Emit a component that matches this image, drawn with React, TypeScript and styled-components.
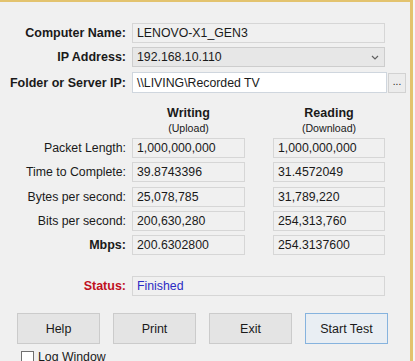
import React from 'react';
import styled, { createGlobalStyle } from 'styled-components';

const GlobalStyle = createGlobalStyle`
  html, body {
    margin: 0;
    padding: 0;
    background: #f6f6f6;
  }
  body {
    font-family: "Liberation Sans", Arial, sans-serif;
    color: #1a1a1a;
  }
`;

const Window = styled.div`
  width: 410px;
  height: 359px;
  background: #f0f0f0;
  border-top: 2px solid #e3c36e;
  border-right: 3px solid #e3c36e;
  display: flex;
  flex-direction: column;
  overflow: hidden;
  font-size: 12.3px;
`;

const Rows = styled.div<{ $gap: number; $top: number }>`
  display: flex;
  flex-direction: column;
  gap: ${p => p.$gap}px;
  margin-top: ${p => p.$top}px;
`;

const Row = styled.div<{ $h?: number }>`
  display: flex;
  align-items: center;
  height: ${p => p.$h ?? 20}px;
`;

const Label = styled.span<{ $bold?: boolean; $color?: string }>`
  width: 126px;
  margin-right: 6px;
  text-align: right;
  white-space: nowrap;
  font-weight: ${p => (p.$bold ? 700 : 400)};
  font-size: ${p => (p.$bold ? 12.5 : 12.3)}px;
  color: ${p => p.$color ?? '#1a1a1a'};
`;

const Field = styled.div<{ $w: number; $color?: string }>`
  box-sizing: border-box;
  width: ${p => p.$w}px;
  height: 100%;
  border: 1px solid #d6d6d6;
  background: #f0f0f0;
  padding-left: 4px;
  display: flex;
  align-items: center;
  white-space: nowrap;
  color: ${p => p.$color ?? '#1a1a1a'};
`;

const Combo = styled(Field)`
  background: #e7e7e7;
  border-color: #cdcdcd;
  justify-content: space-between;
  padding-right: 5px;
`;

const TextInput = styled(Field)`
  background: #ffffff;
  border-color: #cfd6de;
`;

const DotsButton = styled.div`
  box-sizing: border-box;
  width: 18px;
  height: 20px;
  margin-left: 1px;
  border: 1px solid #d2d2d2;
  background: #ececec;
  font-size: 10px;
  display: flex;
  align-items: center;
  justify-content: center;
  padding-bottom: 2px;
`;

const HeaderRow = styled.div`
  display: flex;
  margin-top: 12px;
  padding-left: 132px;
  gap: 28px;
`;

const Header = styled.div<{ $w: number }>`
  width: ${p => p.$w}px;
  display: flex;
  flex-direction: column;
  align-items: center;
`;

const HeaderTitle = styled.span`
  font-weight: 700;
  font-size: 12.5px;
  line-height: 16px;
`;

const HeaderSub = styled.span`
  font-size: 10.6px;
  line-height: 14px;
`;

const Spacer = styled.div<{ $w: number }>`
  width: ${p => p.$w}px;
  flex: none;
`;

const Buttons = styled.div`
  display: flex;
  gap: 13px;
  margin-top: 17px;
  padding-left: 17px;
`;

const Button = styled.div<{ $default?: boolean }>`
  box-sizing: border-box;
  width: 83px;
  height: 31px;
  border: 1px solid ${p => (p.$default ? '#86b3de' : '#cbcbcb')};
  background: ${p => (p.$default ? '#e9eef3' : '#e4e4e4')};
  display: flex;
  align-items: center;
  justify-content: center;
  font-size: 12.5px;
`;

const CheckRow = styled.label`
  display: flex;
  align-items: center;
  gap: 4px;
  margin-top: 6px;
  padding-left: 21px;
  font-size: 12.3px;
`;

const CheckBox = styled.span`
  box-sizing: border-box;
  width: 13px;
  height: 13px;
  border: 1px solid #707070;
  background: #ffffff;
  flex: none;
`;

const Chevron = () => (
  <svg width="8" height="5" viewBox="0 0 8 5">
    <path d="M1 1 L4 4 L7 1" fill="none" stroke="#606060" strokeWidth="1.2" />
  </svg>
);

const results = [
  { label: 'Packet Length:', write: '1,000,000,000', read: '1,000,000,000' },
  { label: 'Time to Complete:', write: '39.8743396', read: '31.4572049' },
  { label: 'Bytes per second:', write: '25,078,785', read: '31,789,220' },
  { label: 'Bits per second:', write: '200,630,280', read: '254,313,760' },
  { label: 'Mbps:', write: '200.6302800', read: '254.3137600', bold: true },
];

export default function App() {
  return (
    <>
      <GlobalStyle />
      <Window>
        <Rows $gap={4} $top={21}>
          <Row>
            <Label $bold>Computer Name:</Label>
            <Field $w={253}>LENOVO-X1_GEN3</Field>
          </Row>
          <Row>
            <Label $bold>IP Address:</Label>
            <Combo $w={253}>
              <span>192.168.10.110</span>
              <Chevron />
            </Combo>
          </Row>
          <Row $h={21} style={{ marginTop: 1 }}>
            <Label $bold>Folder or Server IP:</Label>
            <TextInput $w={255}>\\LIVING\Recorded TV</TextInput>
            <DotsButton>...</DotsButton>
          </Row>
        </Rows>

        <HeaderRow>
          <Header $w={113}>
            <HeaderTitle>Writing</HeaderTitle>
            <HeaderSub>(Upload)</HeaderSub>
          </Header>
          <Header $w={112}>
            <HeaderTitle>Reading</HeaderTitle>
            <HeaderSub>(Download)</HeaderSub>
          </Header>
        </HeaderRow>

        <Rows $gap={4.3} $top={3}>
          {results.map(r => (
            <Row key={r.label}>
              <Label $bold={r.bold}>{r.label}</Label>
              <Field $w={113}>{r.write}</Field>
              <Spacer $w={28} />
              <Field $w={112}>{r.read}</Field>
            </Row>
          ))}
        </Rows>

        <Rows $gap={0} $top={21}>
          <Row>
            <Label $bold $color="#c0101e">Status:</Label>
            <Field $w={253} $color="#2b2bc4">Finished</Field>
          </Row>
        </Rows>

        <Buttons>
          <Button>Help</Button>
          <Button>Print</Button>
          <Button>Exit</Button>
          <Button $default>Start Test</Button>
        </Buttons>

        <CheckRow>
          <CheckBox />
          <span>Log Window</span>
        </CheckRow>
      </Window>
    </>
  );
}
